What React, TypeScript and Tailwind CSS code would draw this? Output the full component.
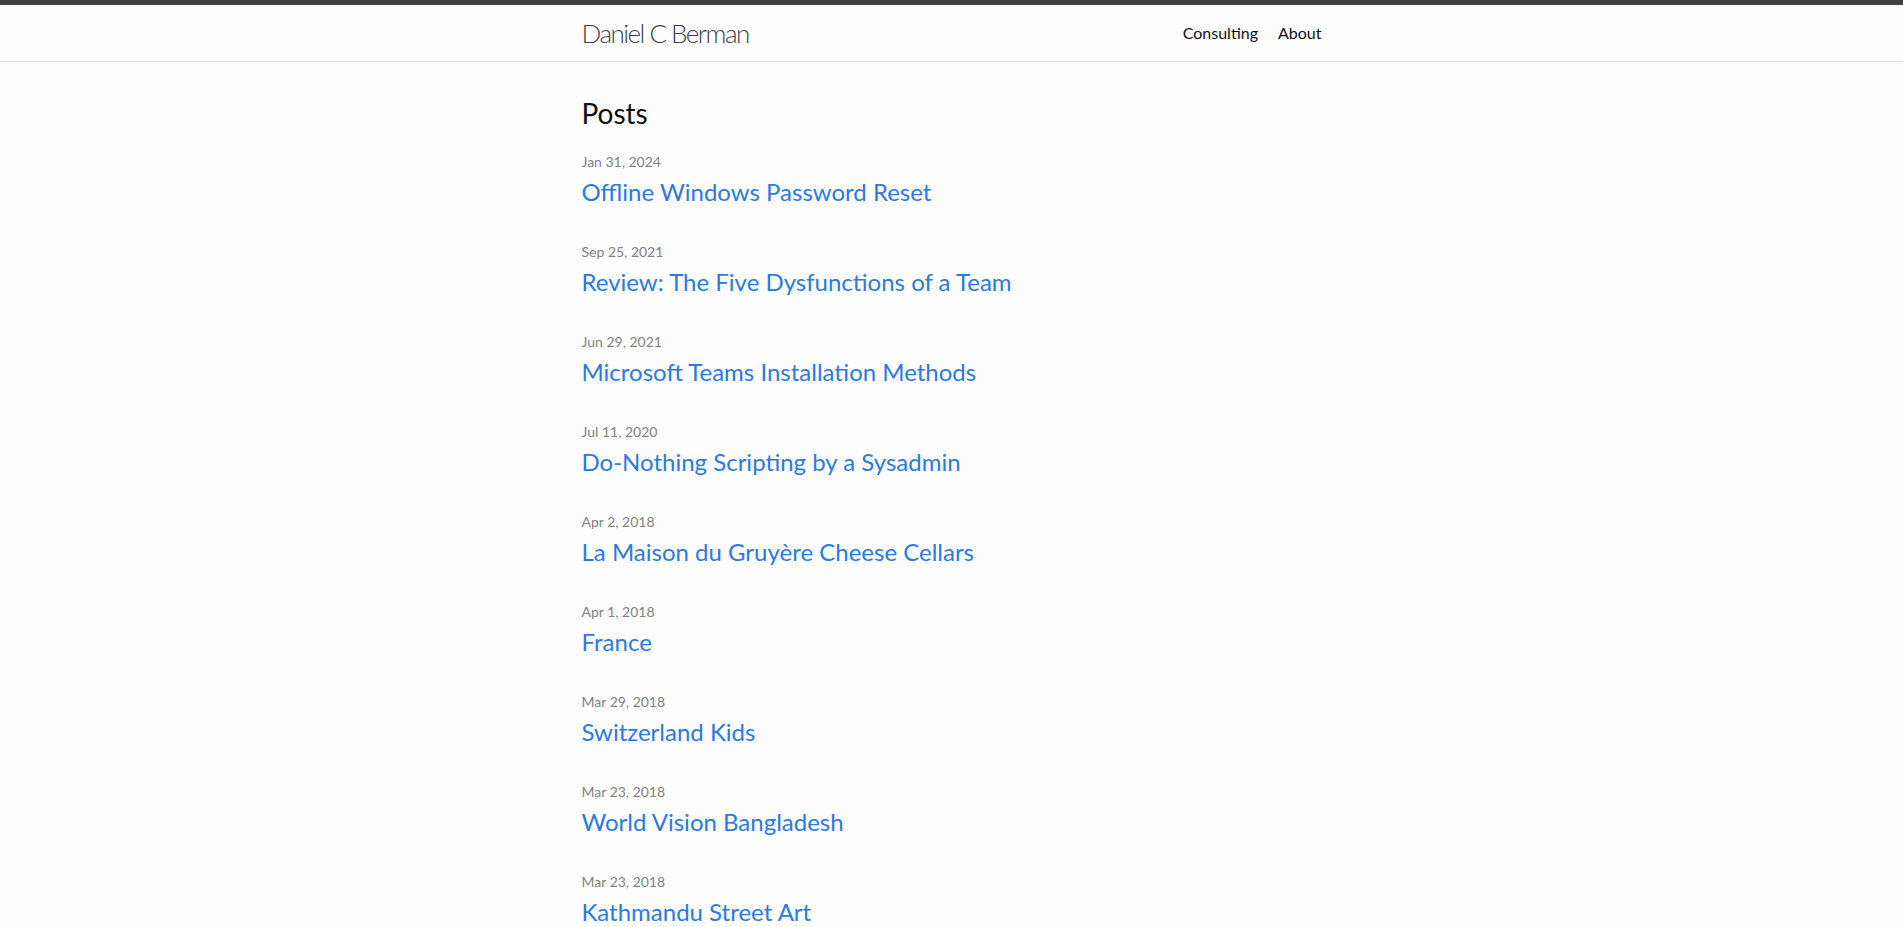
const posts = [
  { date: "Jan 31, 2024", title: "Offline Windows Password Reset" },
  { date: "Sep 25, 2021", title: "Review: The Five Dysfunctions of a Team" },
  { date: "Jun 29, 2021", title: "Microsoft Teams Installation Methods" },
  { date: "Jul 11, 2020", title: "Do-Nothing Scripting by a Sysadmin" },
  { date: "Apr 2, 2018", title: "La Maison du Gruyère Cheese Cellars" },
  { date: "Apr 1, 2018", title: "France" },
  { date: "Mar 29, 2018", title: "Switzerland Kids" },
  { date: "Mar 23, 2018", title: "World Vision Bangladesh" },
  { date: "Mar 23, 2018", title: "Kathmandu Street Art" },
];

export default function App() {
  return (
    <div className="min-h-screen bg-[#fdfdfd] text-[#111] font-['Lato',sans-serif] text-[16px]">
      {/* Header */}
      <header className="border-t-[5px] border-b border-t-[#424242] border-b-[#e8e8e8] min-h-[56px]">
        <div className="max-w-[800px] mx-auto px-[30px] flex justify-between items-center">
          <a href="#" className="text-[26px] font-light tracking-[-1.5px] leading-[56px] text-[#424242]">
            Daniel C Berman
          </a>
          <nav className="flex gap-5 leading-[56px]">
            <a href="#" className="text-[#111]">Consulting</a>
            <a href="#" className="text-[#111]">About</a>
          </nav>
        </div>
      </header>

      {/* Posts */}
      <main className="max-w-[800px] mx-auto px-[30px] pt-[30px] pb-[30px]">
        <h1 className="text-[28px] leading-[42px] font-normal mb-[17px]">Posts</h1>
        <ul>
          {posts.map((p, i) => (
            <li key={i} className="mb-[31px]">
              <span className="block text-[14px] leading-[21px] text-[#828282]">{p.date}</span>
              <h3 className="mt-[2px] text-[24px] leading-[36px] font-normal">
                <a href="#" className="text-[#2a7ae2] hover:underline">
                  {p.title}
                </a>
              </h3>
            </li>
          ))}
        </ul>
      </main>
    </div>
  );
}
